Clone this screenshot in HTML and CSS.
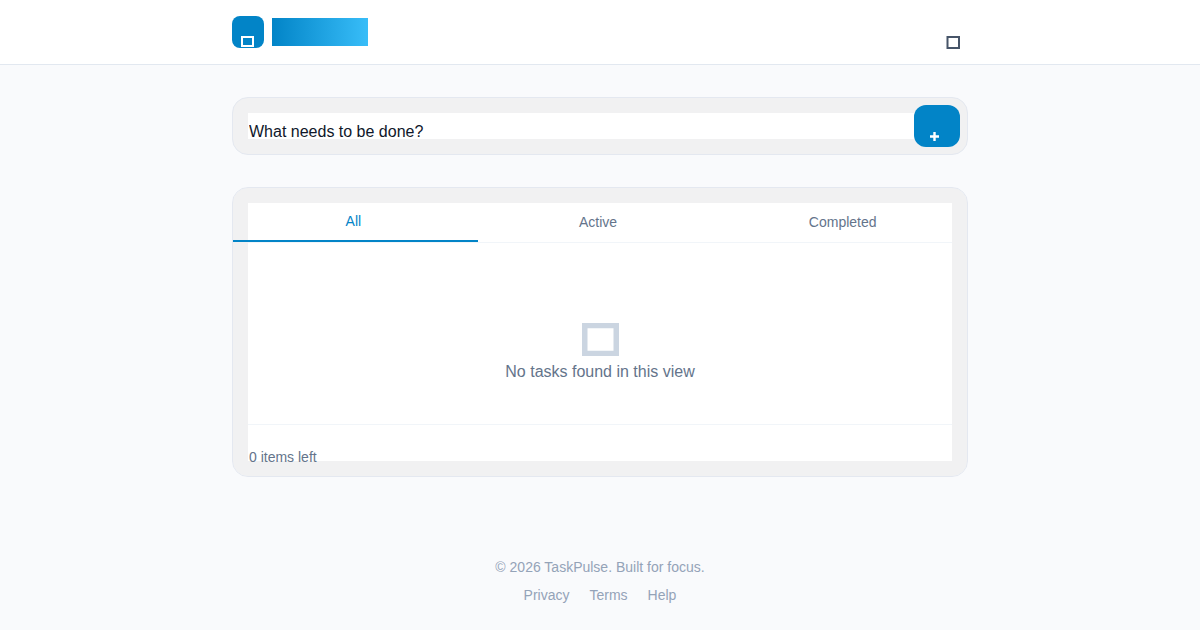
FILE: index.html
```
<!DOCTYPE html>
<html lang="en">

<head>
    <meta charset="UTF-8">
    <meta name="viewport" content="width=device-width, initial-scale=1.0">
    <title>TaskPulse</title>
    <link rel="stylesheet" href="styles.css">
</head>

<body>
    <header class="site-header">
        <div class="container header-inner">
            <a href="#" class="brand" aria-label="TaskPulse">
                <span class="logo">
                    <svg width="13" height="11" viewBox="0 0 13 11" aria-hidden="true">
                        <rect x="1" y="1" width="11" height="9" fill="none" stroke="currentColor" stroke-width="2" />
                    </svg>
                </span>
                <span class="brand-name"></span>
            </a>
            <button type="button" class="theme-toggle" aria-label="Toggle theme">
                <svg width="14" height="13" viewBox="0 0 14 13" aria-hidden="true">
                    <rect x="1.5" y="1" width="11.5" height="11" fill="none" stroke="currentColor" stroke-width="2" />
                </svg>
            </button>
        </div>
    </header>

    <main class="container">
        <form class="card task-form">
            <input type="text" class="task-input" placeholder="What needs to be done?" aria-label="New task">
            <button type="submit" class="add-button" aria-label="Add task">
                <svg width="9" height="9" viewBox="0 0 9 9" aria-hidden="true">
                    <path d="M4.5 0v9M0 4.5h9" stroke="currentColor" stroke-width="2.4" />
                </svg>
            </button>
        </form>

        <section class="card task-list">
            <div class="tabs">
                <button type="button" class="tab active">All</button>
                <button type="button" class="tab">Active</button>
                <button type="button" class="tab">Completed</button>
            </div>
            <div class="empty">
                <svg width="37" height="33" viewBox="0 0 37 33" aria-hidden="true">
                    <rect x="2.75" y="2.5" width="31.5" height="28" fill="none" stroke="currentColor" stroke-width="5.5" />
                </svg>
                <p>No tasks found in this view</p>
            </div>
            <div class="list-footer">0 items left</div>
        </section>
    </main>

    <footer class="site-footer">
        <p>© 2026 TaskPulse. Built for focus.</p>
        <nav class="footer-links">
            <a href="#">Privacy</a>
            <a href="#">Terms</a>
            <a href="#">Help</a>
        </nav>
    </footer>
</body>

</html>
```
FILE: styles.css
```
* {
    box-sizing: border-box;
}

body {
    margin: 0;
    font-family: "Liberation Sans", Arial, sans-serif;
    font-size: 14px;
    line-height: 20px;
    color: #64748b;
    background-color: #f9fafc;
}

p {
    margin: 0;
}

button {
    font: inherit;
    border: none;
    cursor: pointer;
}

.container {
    max-width: 768px;
    margin: 0 auto;
    padding: 0 16px;
}

.site-header {
    background-color: #ffffff;
    border-bottom: 1px solid #e2e8f0;
}

.header-inner {
    display: flex;
    justify-content: space-between;
    align-items: center;
    height: 64px;
}

.brand {
    display: flex;
    align-items: center;
    gap: 8px;
}

.logo {
    display: flex;
    justify-content: center;
    align-items: flex-end;
    width: 32px;
    height: 32px;
    padding: 0 1px 1px 0;
    border-radius: 8px;
    color: #ffffff;
    background-color: #0284c7;
}

.brand-name {
    width: 96px;
    height: 28px;
    background: linear-gradient(to right, #0284c7, #38bdf8);
}

.theme-toggle {
    display: flex;
    justify-content: center;
    align-items: flex-end;
    height: 34px;
    padding: 0 8px 0;
    color: #475569;
    background: none;
}

.card {
    border: 1px solid #e4e8f0;
    border-radius: 16px;
    background-color: #f1f1f2;
}

.task-form {
    display: flex;
    align-items: center;
    margin-top: 32px;
    padding: 7px 7px 7px 15px;
}

.task-input {
    flex: 1;
    min-width: 0;
    height: 26px;
    padding: 11px 1px 0;
    border: none;
    outline: none;
    font: inherit;
    font-size: 16px;
    line-height: 16px;
    color: #0f172a;
    background-color: #ffffff;
}

.task-input::placeholder {
    color: #0f172a;
}

.add-button {
    display: flex;
    justify-content: center;
    align-items: flex-end;
    width: 46px;
    height: 42px;
    padding: 0 5px 6px 0;
    border-radius: 12px;
    color: #ffffff;
    background-color: #0284c7;
}

.task-list {
    margin-top: 32px;
    overflow: hidden;
    background-color: #ffffff;
    box-shadow: inset 0 0 0 15px #f1f1f2;
}

.tabs {
    display: flex;
}

.tab {
    flex: 1;
    height: 54px;
    padding: 14px 4px 0 0;
    color: #64748b;
    background: none;
}

.tab.active {
    color: #0284c7;
    border-bottom: 2px solid #0284c7;
}

.empty {
    display: flex;
    flex-direction: column;
    align-items: center;
    gap: 4px;
    margin: 0 15px;
    padding: 80px 0 40px;
    font-size: 16px;
    line-height: 24px;
    border-top: 1px solid #f1f5f9;
    border-bottom: 1px solid #f1f5f9;
}

.empty svg {
    color: #cbd5e1;
}

.list-footer {
    padding: 22px 16px 9px;
}

.site-footer {
    display: flex;
    flex-direction: column;
    align-items: center;
    gap: 8px;
    margin-top: 80px;
    padding-bottom: 24px;
    color: #94a3b8;
}

.footer-links {
    display: flex;
    gap: 20px;
}

.footer-links a {
    color: inherit;
    text-decoration: none;
}
```
